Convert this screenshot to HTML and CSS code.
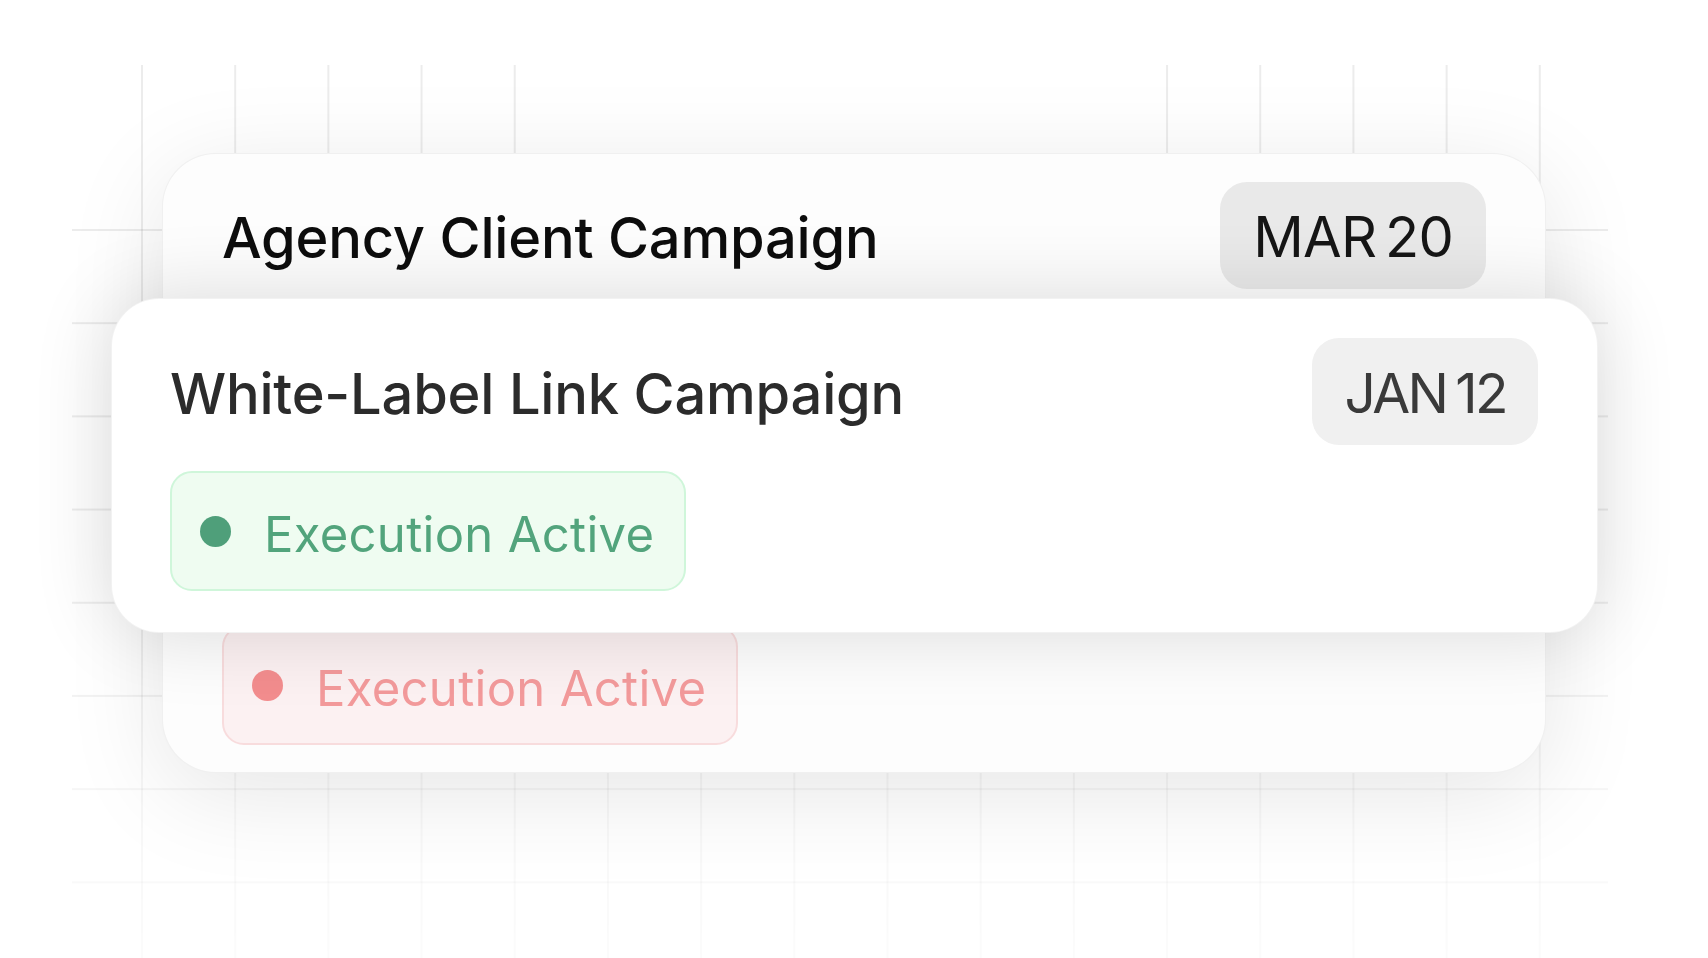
FILE: index.html
```html
<!DOCTYPE html>
<html lang="en">
<head>
<meta charset="utf-8">
<title>Campaigns</title>
<link rel="stylesheet" href="styles.css">
</head>
<body>
<div class="scene">
  <div class="grid" aria-hidden="true">
    <div class="grid-v"></div>
    <div class="grid-h"></div>
  </div>
  <div class="stack">
    <div class="card card-back">
      <div class="row">
        <h2 class="title title-back">Agency Client Campaign</h2>
        <span class="date date-back">MAR 20</span>
      </div>
      <div class="pill pill-red"><span class="dot"></span><span class="pill-text">Execution Active</span></div>
    </div>
    <div class="card card-front">
      <div class="row">
        <h2 class="title title-front">White-Label Link Campaign</h2>
        <span class="date date-front">JAN 12</span>
      </div>
      <div class="pill pill-green"><span class="dot"></span><span class="pill-text">Execution Active</span></div>
    </div>
  </div>
</div>
</body>
</html>
```
FILE: styles.css
```css
* { box-sizing: border-box; margin: 0; padding: 0; }
html, body { margin: 0; }
body {
  width: 1708px;
  height: 958px;
  overflow: hidden;
  background: #ffffff;
  font-family: Inter, "Noto Sans", sans-serif;
}
.scene {
  position: relative;
  width: 1708px;
  height: 958px;
  overflow: hidden;
}
.grid {
  position: absolute;
  left: 72px;
  top: 65px;
  width: 1536px;
  height: 893px;
  -webkit-mask-image: linear-gradient(to bottom, #000 0%, #000 55%, rgba(0,0,0,.4) 85%, rgba(0,0,0,.2) 100%);
  mask-image: linear-gradient(to bottom, #000 0%, #000 55%, rgba(0,0,0,.4) 85%, rgba(0,0,0,.2) 100%);
}
.grid-v {
  position: absolute;
  inset: 0;
  background-image: linear-gradient(to right, rgba(0,0,0,.075) 0 2px, transparent 2px);
  background-size: 93.2px 100%;
  background-position: 69px 0;
  background-repeat: repeat-x;
  -webkit-mask-image: linear-gradient(to bottom, transparent 0 88px, #000 88px), linear-gradient(to right, #000 0 470px, transparent 470px 1060px, #000 1060px);
  mask-image: linear-gradient(to bottom, transparent 0 88px, #000 88px), linear-gradient(to right, #000 0 470px, transparent 470px 1060px, #000 1060px);
}
.grid-h {
  position: absolute;
  left: 0;
  right: 0;
  top: 164px;
  bottom: 0;
  background-image: linear-gradient(to bottom, rgba(0,0,0,.075) 0 2px, transparent 2px);
  background-size: 100% 93.2px;
}
.stack {
  position: relative;
  display: grid;
  width: 1487px;
  margin-left: 111px;
  padding-top: 153px;
}
.card {
  grid-area: 1 / 1;
  border: 1px solid rgba(0,0,0,.05);
}
.card-back {
  margin: 0 52px 0 51px;
  height: 620px;
  border-radius: 54px;
  padding: 28px 59px 27px 59px;
  display: flex;
  flex-direction: column;
  justify-content: space-between;
  background: #fdfdfd;
  box-shadow: 0 20px 100px rgba(0,0,0,.10);
}
.card-front {
  margin-top: 145px;
  align-self: start;
  border-radius: 48px;
  padding: 39px 59px 41px 58px;
  display: flex;
  flex-direction: column;
  gap: 26px;
  background: #ffffff;
  box-shadow: 0 0 80px rgba(0,0,0,.14);
}
.row {
  display: flex;
  justify-content: space-between;
  align-items: center;
}
.title {
  font-size: 56px;
  font-weight: 500;
  line-height: 56px;
  padding-top: 4px;
  letter-spacing: -0.2px;
}
.title-back { color: #0d0d0d; }
.title-front { color: #2b2b2b; }
.date {
  font-size: 56px;
  line-height: 57px;
  padding: 27px 33px 23px;
  border-radius: 27px;
  font-weight: 400;
  font-feature-settings: "pnum" 1;
  letter-spacing: -0.8px;
  word-spacing: -6px;
}
.date-back { background: #e9e9e9; color: #161616; }
.date-front {
  background: #f0f0f0;
  color: #3a3a3a;
  font-size: 55px;
  padding: 27px 32px 23px 33px;
  letter-spacing: -2.6px;
  word-spacing: -4px;
}
.pill {
  align-self: flex-start;
  display: flex;
  align-items: center;
  gap: 33px;
  height: 120px;
  padding: 0 30px 0 28px;
  border: 2px solid;
  border-radius: 22px;
}
.dot {
  width: 31px;
  height: 31px;
  border-radius: 50%;
  flex: none;
}
.pill-text {
  font-size: 49px;
  line-height: 49px;
  padding-top: 7px;
  letter-spacing: 0.3px;
}
.pill-green { background: #effcf1; border-color: #cff6da; }
.pill-green .dot { background: #4f9f7a; }
.pill-green .pill-text { color: #52a47c; }
.pill-red { background: #fcf1f2; border-color: #f8dcdd; }
.pill-red .dot { background: #f38d8e; }
.pill-red .pill-text { color: #f39a9b; }
```
